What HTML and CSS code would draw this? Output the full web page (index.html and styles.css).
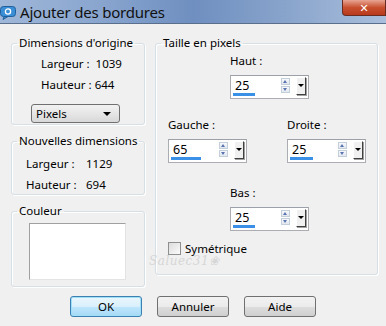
FILE: index.html
```html
<!DOCTYPE html>
<html lang="fr">
<head>
  <meta charset="UTF-8">
  <title>Ajouter des bordures</title>
  <link rel="stylesheet" href="styles.css">
</head>
<body>
  <div class="window">
    <div class="titlebar">
      <svg class="app-icon" width="17" height="15" viewBox="0 0 17 15">
        <rect x="0.5" y="1.5" width="15" height="10" rx="3" fill="#3b8fd6" stroke="#1f5f9c"/>
        <path d="M4 11.5 L3 14.5 L8 11.5 Z" fill="#3b8fd6" stroke="#1f5f9c"/>
        <circle cx="8" cy="6.5" r="2.6" fill="none" stroke="#fff" stroke-width="1.3"/>
      </svg>
      <span class="title">Ajouter des bordures</span>
      <div class="close">&#x2715;</div>
    </div>

    <div class="content">
      <div class="left">
        <fieldset class="group g-orig">
          <legend>Dimensions d'origine</legend>
          <div class="dim-row orig first">Largeur :&nbsp; 1039</div>
          <div class="dim-row orig">Hauteur : 644</div>
          <div class="select">Pixels<span class="caret"></span></div>
        </fieldset>

        <fieldset class="group g-new">
          <legend>Nouvelles dimensions</legend>
          <div class="dim-row new first"><span class="k">Largeur :</span><span class="v">1129</span></div>
          <div class="dim-row new"><span class="k">Hauteur :</span><span class="v">694</span></div>
        </fieldset>

        <fieldset class="group g-color">
          <legend>Couleur</legend>
          <div class="swatch"></div>
        </fieldset>
      </div>

      <fieldset class="group right">
        <legend>Taille en pixels</legend>

        <div class="field top">
          <div class="lbl">Haut :</div>
          <div class="spin"><span class="num">25</span><span class="bar" style="width:22px"></span><span class="arrows"><i class="up"></i><i class="down"></i></span><span class="drop"></span></div>
        </div>

        <div class="side-row">
          <div class="field">
            <div class="lbl">Gauche :</div>
            <div class="spin"><span class="num">65</span><span class="bar" style="width:30px"></span><span class="arrows"><i class="up"></i><i class="down"></i></span><span class="drop"></span></div>
          </div>
          <div class="field">
            <div class="lbl">Droite :</div>
            <div class="spin"><span class="num">25</span><span class="bar" style="width:23px"></span><span class="arrows"><i class="up"></i><i class="down"></i></span><span class="drop"></span></div>
          </div>
        </div>

        <div class="field bottom">
          <div class="lbl">Bas :</div>
          <div class="spin"><span class="num">25</span><span class="bar" style="width:22px"></span><span class="arrows"><i class="up"></i><i class="down"></i></span><span class="drop"></span></div>
        </div>

        <label class="check"><span class="box"></span>Symétrique</label>
        <div class="mark">Saluec31&#x2740;</div>
      </fieldset>
    </div>

    <div class="buttons">
      <button class="btn default">OK</button>
      <button class="btn">Annuler</button>
      <button class="btn">Aide</button>
    </div>
  </div>
</body>
</html>
```

FILE: styles.css
```css
body {
  margin: 0;
  font-family: "Noto Sans", "DejaVu Sans", sans-serif;
  font-size: 11.5px;
  color: #000;
  background: #f0f0f0;
}
.window {
  width: 386px;
  height: 326px;
  background: #f0f0f0;
  overflow: hidden;
}
.titlebar {
  position: relative;
  height: 23px;
  display: flex;
  align-items: center;
  background: linear-gradient(90deg, #9fb7d8 0%, #8aa6cf 25%, #6f8fc0 50%, #8aa5cc 75%, #a9bfdc 100%);
  border-bottom: 1px solid #5a6f8c;
}
.app-icon {
  margin-top: 1px;
}
.title {
  margin-left: 3px;
  font-size: 15px;
  color: #111;
  letter-spacing: -0.2px;
  white-space: nowrap;
}
.close {
  position: absolute;
  right: 0;
  top: 0;
  width: 42px;
  height: 15px;
  background: linear-gradient(#e8a593, #c7502f 50%, #b83a1c);
  border: 1px solid #6a2c20;
  border-top: none;
  border-radius: 0 0 0 4px;
  color: #fff;
  font-size: 11px;
  font-weight: bold;
  line-height: 15px;
  text-align: center;
}
.content {
  display: flex;
  gap: 10px;
  padding: 11px 0 0 11px;
}
.left {
  width: 134px;
  display: flex;
  flex-direction: column;
  gap: 8px;
}
.group {
  margin: 0;
  padding: 0;
  border: 1px solid #d5dfe5;
  border-radius: 3px;
  box-shadow: inset 1px 1px #fff, 1px 1px #fff;
  box-sizing: border-box;
  min-width: 0;
}
.group legend {
  margin-left: 5px;
  padding: 0 2px;
  line-height: 16px;
  white-space: nowrap;
}
.g-orig { height: 90px; }
.g-new { height: 62px; }
.g-color { height: 84px; }
.dim-row {
  display: flex;
  height: 21px;
  align-items: center;
  white-space: nowrap;
}
.dim-row.orig { padding-left: 29px; }
.dim-row.orig.first { margin-top: 2px; }
.dim-row.new { padding-left: 14px; }
.dim-row.new .k { width: 60px; }
.dim-row.new.first { margin-top: 4px; }
.select {
  position: relative;
  margin: 9px 0 0 19px;
  width: 89px;
  height: 19px;
  box-sizing: border-box;
  border: 1px solid #707070;
  border-radius: 3px;
  background: linear-gradient(#f2f2f2, #e6e6e6 50%, #d8d8d8);
  padding-left: 4px;
  line-height: 17px;
}
.caret {
  position: absolute;
  right: 8px;
  top: 7px;
  border-left: 4px solid transparent;
  border-right: 4px solid transparent;
  border-top: 4px solid #000;
}
.swatch {
  margin: 4px 0 0 17px;
  width: 97px;
  height: 57px;
  background: #fff;
  box-sizing: border-box;
  border-top: 1px solid #a0a0a0;
  border-left: 1px solid #a0a0a0;
  border-right: 1px solid #e3e3e3;
  border-bottom: 1px solid #e3e3e3;
}
.right {
  position: relative;
  width: 223px;
  height: 240px;
}
.field .lbl {
  line-height: 16px;
  margin-bottom: 6px;
}
.field.top {
  margin: 2px 0 0 74px;
}
.side-row {
  display: flex;
  gap: 40px;
  margin: 18px 0 0 12px;
}
.field.bottom {
  margin: 22px 0 0 74px;
}
.spin {
  position: relative;
  width: 79px;
  height: 24px;
  box-sizing: border-box;
  border: 1px solid #abadb3;
  border-top-color: #9ca0a8;
  background: #fff;
}
.num {
  position: absolute;
  left: 4px;
  top: 3px;
  font-size: 12.5px;
  line-height: 14px;
}
.bar {
  position: absolute;
  left: 2px;
  bottom: 2px;
  height: 3px;
  background: #3a8fe6;
}
.arrows {
  position: absolute;
  right: 18px;
  top: 2px;
  width: 9px;
  display: flex;
  flex-direction: column;
  gap: 1px;
}
.arrows i {
  display: block;
  height: 7px;
  box-sizing: border-box;
  border: 1px solid #c4cfdc;
  background: linear-gradient(#f6f8fb, #e2e8ef);
  position: relative;
}
.arrows i::after {
  content: "";
  position: absolute;
  left: 1px;
  border-left: 2.5px solid transparent;
  border-right: 2.5px solid transparent;
}
.arrows .up::after {
  top: 1px;
  border-bottom: 3px solid #5a74b0;
}
.arrows .down::after {
  top: 1px;
  border-top: 3px solid #5a74b0;
}
.drop {
  position: absolute;
  right: 2px;
  top: 1px;
  width: 10px;
  height: 18px;
  box-sizing: border-box;
  background: #f0f0f0;
  border-top: 1px solid #fff;
  border-left: 1px solid #fff;
  border-right: 1px solid #404040;
  border-bottom: 1px solid #404040;
  box-shadow: 1px 1px #a0a0a0;
}
.drop::after {
  content: "";
  position: absolute;
  left: 1px;
  top: 6px;
  border-left: 3px solid transparent;
  border-right: 3px solid transparent;
  border-top: 3px solid #000;
}
.check {
  display: flex;
  align-items: center;
  gap: 4px;
  margin: 10px 0 0 12px;
  line-height: 15px;
}
.check .box {
  width: 13px;
  height: 13px;
  box-sizing: border-box;
  border: 1px solid #8e8f8f;
  background: linear-gradient(135deg, #dcdcdc, #fbfbfb);
}
.mark {
  position: absolute;
  left: -7px;
  bottom: 7px;
  font-family: "DejaVu Serif", serif;
  font-style: italic;
  font-size: 12px;
  line-height: 12px;
  color: #d6d6d6;
  letter-spacing: 0.5px;
}
.buttons {
  display: flex;
  gap: 15px;
  padding: 9px 0 0 70px;
}
.btn {
  width: 72px;
  height: 21px;
  padding: 0;
  box-sizing: border-box;
  border: 1px solid #707070;
  border-radius: 3px;
  background: linear-gradient(#f2f2f2, #ebebeb 50%, #dddddd 51%, #cfcfcf);
  font-family: "Noto Sans", "DejaVu Sans", sans-serif;
  font-size: 11.5px;
  color: #000;
}
.btn.default {
  border-color: #3c7fb1;
  box-shadow: inset 0 0 0 1px #9fe0f8;
  background: linear-gradient(#eaf6fd, #d9f0fc 50%, #bee6fd 51%, #a7d9f5);
}
```
